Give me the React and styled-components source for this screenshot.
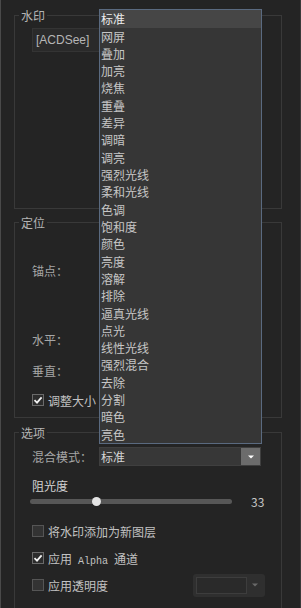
import React from 'react';
import styled, { createGlobalStyle } from 'styled-components';

const GlobalStyle = createGlobalStyle`
  html, body {
    margin: 0;
    padding: 0;
    background: #242424;
  }
  body {
    font-family: "Noto Sans CJK SC", "Liberation Sans", sans-serif;
    font-size: 12px;
  }
`;

const blendModes = [
  '标准', '网屏', '叠加', '加亮', '烧焦', '重叠', '差异', '调暗', '调亮',
  '强烈光线', '柔和光线', '色调', '饱和度', '颜色', '亮度', '溶解', '排除',
  '逼真光线', '点光', '线性光线', '强烈混合', '去除', '分割', '暗色', '亮色',
];

// Panel + group boxes
const Panel = styled.div`
  position: relative;
  width: 301px;
  height: 608px;
  box-sizing: border-box;
  border-left: 1px solid #4a4a4a;
  border-right: 1px solid #3a3a3a;
  padding: 0 18px 0 13px;
  background: #242424;
  overflow: hidden;
`;

const Group = styled.fieldset`
  margin: ${p => p.$gap}px 0 0;
  padding: 0;
  border: 1px solid #393939;
  min-width: 0;
`;

const Legend = styled.legend`
  margin-left: 4px;
  padding: 0 2px;
  font-size: 12px;
  line-height: 15px;
  color: #b4b4b4;
`;

const Body = styled.div`
  height: ${p => p.$h}px;
  box-sizing: border-box;
  padding: ${p => p.$pad};
  display: flex;
  flex-direction: column;
`;

const TextInput = styled.div`
  width: 230px;
  height: 24px;
  box-sizing: border-box;
  background: #2a2a2a;
  border: 1px solid #343434;
  padding-left: 3px;
  display: flex;
  align-items: center;
  font-family: "Liberation Sans", sans-serif;
  font-size: 12px;
  color: #b6b6b6;
`;

const Row = styled.div`
  display: flex;
  align-items: center;
  height: ${p => p.$h || 20}px;
  margin-top: ${p => p.$top || 0}px;
`;

const Label = styled.span`
  font-size: 12px;
  color: ${p => p.$bright ? '#d2d2d2' : '#a6a6a6'};
  width: ${p => p.$w ? `${p.$w}px` : 'auto'};
  flex-shrink: 0;
  line-height: 14px;
  white-space: nowrap;
`;

// Checkbox
const Box = styled.span`
  width: 12px;
  height: 12px;
  box-sizing: border-box;
  border: 1px solid ${p => p.$checked ? '#6a6a6a' : '#555'};
  background: ${p => p.$checked ? '#2c2c2c' : '#333'};
  display: flex;
  align-items: center;
  justify-content: center;
  flex-shrink: 0;
`;

const CheckText = styled.span`
  margin-left: 4px;
  font-size: 12px;
  color: #c2c2c2;
  white-space: nowrap;
`;

const Mono = styled.span`
  font-family: "Liberation Mono", monospace;
  font-size: 10px;
  white-space: pre;
`;

const Check = ({ checked, children }) => (
  <>
    <Box $checked={checked}>
      {checked && (
        <svg width="10" height="10" viewBox="0 0 10 10">
          <path d="M1.5 5.2 L4 7.6 L8.6 2.4" fill="none" stroke="#f2f2f2" strokeWidth="1.8" />
        </svg>
      )}
    </Box>
    <CheckText>{children}</CheckText>
  </>
);

// Select with the open list
const SelectWrap = styled.div`
  position: relative;
  margin-left: 7px;
`;

const Select = styled.div`
  width: 162px;
  height: 19px;
  box-sizing: border-box;
  background: #373737;
  border: 1px solid #3f3f3f;
  display: flex;
  align-items: center;
  padding-left: 1px;
  font-size: 12px;
  color: #d4d4d4;
`;

const SelectValue = styled.span`
  flex: 1;
`;

const ArrowBtn = styled.span`
  width: 19px;
  height: 17px;
  background: #6c6c6c;
  display: flex;
  align-items: center;
  justify-content: center;
`;

const List = styled.ul`
  position: absolute;
  left: 0;
  bottom: calc(100% + 3px);
  width: 163px;
  margin: 0;
  padding: 0;
  list-style: none;
  box-sizing: border-box;
  background: #363636;
  border: 1px solid #5a6a80;
  z-index: 2;
`;

const Item = styled.li`
  height: 17.32px;
  line-height: 17.32px;
  padding-left: 1px;
  font-size: 12px;
  color: ${p => p.$active ? '#ececec' : '#c6c6c6'};
  background: ${p => p.$active ? '#464646' : 'transparent'};
`;

// Slider
const SliderRow = styled.div`
  display: flex;
  align-items: center;
  height: 12px;
  margin: 2px 0 0 -2px;
`;

const Track = styled.div`
  position: relative;
  width: 202px;
  height: 5px;
  border-radius: 3px;
  background: #575757;
`;

const Thumb = styled.span`
  position: absolute;
  top: 50%;
  width: 9px;
  height: 9px;
  margin: -4.5px 0 0 -4.5px;
  border-radius: 50%;
  background: #e4e4e4;
`;

const Value = styled.span`
  margin-left: 19px;
  font-size: 12px;
  color: #c6c6c6;
`;

// Disabled combo
const DimCombo = styled.div`
  margin-left: auto;
  width: 72px;
  height: 23px;
  box-sizing: border-box;
  border-radius: 3px;
  background: #2f2f2f;
  padding: 3px;
  display: flex;
  align-items: center;
`;

const DimField = styled.span`
  width: 51px;
  height: 17px;
  box-sizing: border-box;
  border: 1px solid #3d3d3d;
  background: #2a2a2a;
`;

const DimArrow = styled.span`
  flex: 1;
  display: flex;
  justify-content: center;
`;

const Triangle = ({ color }) => (
  <svg width="6" height="4" viewBox="0 0 6 4">
    <polygon points="0,0.5 6,0.5 3,3.5" fill={color} />
  </svg>
);

export default function App() {
  const opacity = 33;
  return (
    <>
      <GlobalStyle />
      <Panel>
        <Group $gap={8}>
          <Legend>水印</Legend>
          <Body $h={185} $pad="5px 0 0 17px">
            <TextInput>[ACDSee]</TextInput>
          </Body>
        </Group>

        <Group $gap={6}>
          <Legend>定位</Legend>
          <Body $h={187} $pad="0 0 0 17px">
            <Row $top={31}><Label>锚点：</Label></Row>
            <Row $top={49}><Label>水平：</Label></Row>
            <Row $top={11}><Label>垂直：</Label></Row>
            <Row $top={9}><Check checked>调整大小</Check></Row>
          </Body>
        </Group>

        <Group $gap={7}>
          <Legend>选项</Legend>
          <Body $h={200} $pad="7px 16px 0 17px">
            <Row $h={19}>
              <Label $w={60}>混合模式：</Label>
              <SelectWrap>
                <List>
                  {blendModes.map((m, i) => (
                    <Item key={m} $active={i === 0}>{m}</Item>
                  ))}
                </List>
                <Select>
                  <SelectValue>标准</SelectValue>
                  <ArrowBtn><Triangle color="#ffffff" /></ArrowBtn>
                </Select>
              </SelectWrap>
            </Row>
            <Row $h={14} $top={13}><Label $bright>阻光度</Label></Row>
            <SliderRow>
              <Track>
                <Thumb style={{ left: `${opacity}%` }} />
              </Track>
              <Value>{opacity}</Value>
            </SliderRow>
            <Row $top={14}><Check>将水印添加为新图层</Check></Row>
            <Row $top={7}><Check checked>应用<Mono> Alpha </Mono>通道</Check></Row>
            <Row $top={7}>
              <Check>应用透明度</Check>
              <DimCombo>
                <DimField />
                <DimArrow><Triangle color="#6a6a6a" /></DimArrow>
              </DimCombo>
            </Row>
          </Body>
        </Group>
      </Panel>
    </>
  );
}
